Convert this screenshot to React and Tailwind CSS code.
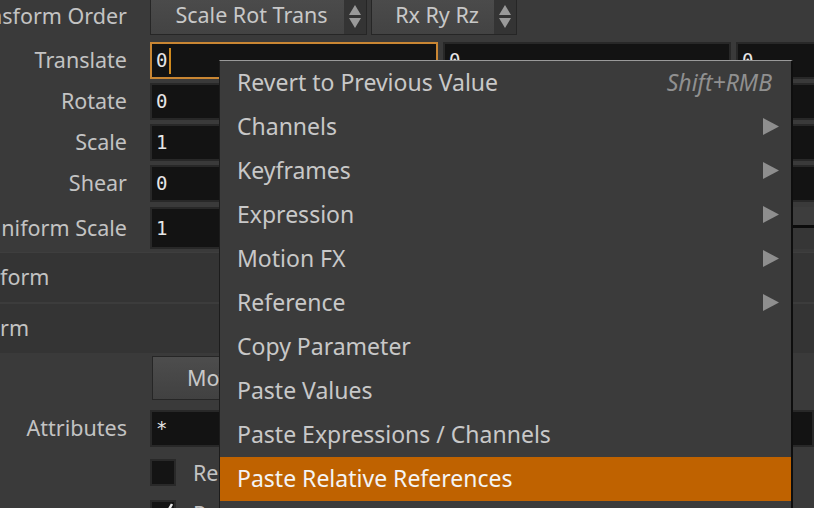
import { Fragment } from 'react'

const menuItems = [
  { label: 'Revert to Previous Value', shortcut: 'Shift+RMB' },
  { label: 'Channels', sub: true },
  { label: 'Keyframes', sub: true },
  { label: 'Expression', sub: true },
  { label: 'Motion FX', sub: true },
  { label: 'Reference', sub: true },
  { label: 'Copy Parameter' },
  { label: 'Paste Values' },
  { label: 'Paste Expressions / Channels' },
  { label: 'Paste Relative References', active: true },
  { label: 'Paste Copied Relative References' },
]

function Label({ children }) {
  return (
    <div className="w-[127px] shrink-0 flex justify-end">
      <span className="whitespace-nowrap text-[21.5px] text-[#c3c3c3]">{children}</span>
    </div>
  )
}

function Field({ value, focused, className = 'w-[288px] h-[37px]' }) {
  return (
    <div
      className={
        'shrink-0 flex items-center pl-[4px] bg-[#131313] border-2 ' +
        (focused ? 'border-[#c98633] ' : 'border-[#282828] ') +
        className
      }
    >
      <span className="font-['DejaVu_Sans_Mono',monospace] text-[19px] text-[#e6e6e6] leading-none">{value}</span>
      {focused && <span className="ml-[2px] w-[2px] h-[26px] bg-[#d08a1e]" />}
    </div>
  )
}

function Spinner() {
  return (
    <div className="w-[22px] self-stretch bg-[#343434] flex flex-col items-center justify-center gap-[3px]">
      <svg width="12" height="10" viewBox="0 0 12 10"><path d="M6 0 L12 10 L0 10 Z" fill="#9a9a9a" /></svg>
      <svg width="12" height="10" viewBox="0 0 12 10"><path d="M0 0 L12 0 L6 10 Z" fill="#9a9a9a" /></svg>
    </div>
  )
}

function Dropdown({ text, width }) {
  return (
    <div className={'h-[37px] -mt-[2px] flex border border-[#262626] bg-gradient-to-b from-[#4b4b4b] to-[#434343] ' + width}>
      <div className="flex-1 flex items-center justify-center pb-[3px] pl-[8px] text-[21.5px] text-[#c8c8c8]">{text}</div>
      <Spinner />
    </div>
  )
}

function Row3({ label, value, focused }) {
  return (
    <div className="h-[41px] flex items-start">
      <div className="h-[37px] flex items-center"><Label>{label}</Label></div>
      <div className="ml-[23px] flex gap-[5px]">
        <Field value={value} focused={focused} />
        <Field value={value} />
        <Field value={value} />
      </div>
    </div>
  )
}

export default function App() {
  return (
    <div className="relative w-[814px] h-[508px] overflow-hidden bg-[#3a3a3a] font-['Noto_Sans',sans-serif]">
      {/* parameter pane */}
      <div className="flex flex-col">
        <div className="h-[42px] flex items-start">
          <div className="h-[33px] flex items-center"><Label>Transform Order</Label></div>
          <div className="ml-[23px] flex gap-[4px]">
            <Dropdown text="Scale Rot Trans" width="w-[217px]" />
            <Dropdown text="Rx Ry Rz" width="w-[146px]" />
          </div>
        </div>

        <Row3 label="Translate" value="0" focused />
        <Row3 label="Rotate" value="0" />
        <Row3 label="Scale" value="1" />
        <Row3 label="Shear" value="0" />

        <div className="h-[44px] flex items-start pt-[1px]">
          <div className="h-[42px] flex items-center"><Label>Uniform Scale</Label></div>
          <div className="ml-[23px] flex flex-1">
            <Field value="1" className="w-[140px] h-[42px]" />
            <div className="flex-1 flex flex-col pl-[8px]">
              <div className="h-[18px] bg-[#3d3d3d]" />
              <div className="h-[3px] bg-[#0c0c0c]" />
              <div className="flex-1 bg-[#363636]" />
            </div>
          </div>
        </div>

        <div className="h-[2px]" />
        <div className="border-t-[1px] border-[#3e3e3e] h-[50px] bg-[#343434] flex items-center">
          <span className="text-[21.5px] text-[#c3c3c3]">form</span>
        </div>
        <div className="h-[2px] bg-[#3c3c3c]" />
        <div className="h-[49px] bg-[#343434] flex items-center">
          <span className="text-[21.5px] text-[#c3c3c3]">rm</span>
        </div>

        <div className="h-[57px] pl-[152px] pt-[3px]">
          <div className="w-[260px] h-[44px] border border-[#262626] bg-gradient-to-b from-[#4d4d4d] to-[#414141] flex items-center pl-[34px] text-[21.5px] text-[#c8c8c8] whitespace-nowrap">
            Move Centroid to Origin
          </div>
        </div>

        <div className="h-[49px] flex items-start">
          <div className="h-[37px] flex items-center"><Label>Attributes</Label></div>
          <div className="ml-[23px] flex-1">
            <Field value="*" className="w-full h-[37px]" />
          </div>
        </div>

        <div className="h-[41px] flex items-start pl-[150px] gap-[17px]">
          <div className="w-[26px] h-[27px] bg-[#141414] border-2 border-[#292929]" />
          <span className="text-[21.5px] text-[#c3c3c3] leading-[27px]">Recompute Point Normals</span>
        </div>
        <div className="h-[30px] flex items-start pl-[150px] gap-[17px]">
          <div className="w-[26px] h-[27px] bg-[#141414] border-2 border-[#292929] relative">
            <svg className="absolute left-[6px] top-0" width="16" height="20" viewBox="0 0 16 20">
              <path d="M2 10 L6 16 L14 2" stroke="#e8e8e8" strokeWidth="2.5" fill="none" />
            </svg>
          </div>
          <span className="text-[21.5px] text-[#c3c3c3] leading-[27px]">Preserve Normal Length</span>
        </div>
      </div>

      {/* context menu */}
      <div className="absolute left-[219px] top-[60px] w-[574px] h-[520px] bg-[#3b3b3b] border-t border-t-[#9a9a9a] border-l border-l-[#1c1c1c] border-r-2 border-r-[#0e0e0e] flex flex-col">
        {menuItems.map((it) => (
          <Fragment key={it.label}>
            <div
              className={
                'h-[44px] shrink-0 flex items-center pl-[17px] pr-[12px] pb-[1px] text-[23px] ' +
                (it.active ? 'bg-[#bf6200] text-[#f4f4f4]' : 'text-[#c8c8c8]')
              }
            >
              <span className="flex-1 whitespace-nowrap">{it.label}</span>
              {it.shortcut && <span className="italic text-[#909090] pr-[7px]">{it.shortcut}</span>}
              {it.sub && (
                <svg width="16" height="17" viewBox="0 0 16 17">
                  <path d="M0 0 L16 8.5 L0 17 Z" fill="#8e8e8e" />
                </svg>
              )}
            </div>
          </Fragment>
        ))}
      </div>
    </div>
  )
}
